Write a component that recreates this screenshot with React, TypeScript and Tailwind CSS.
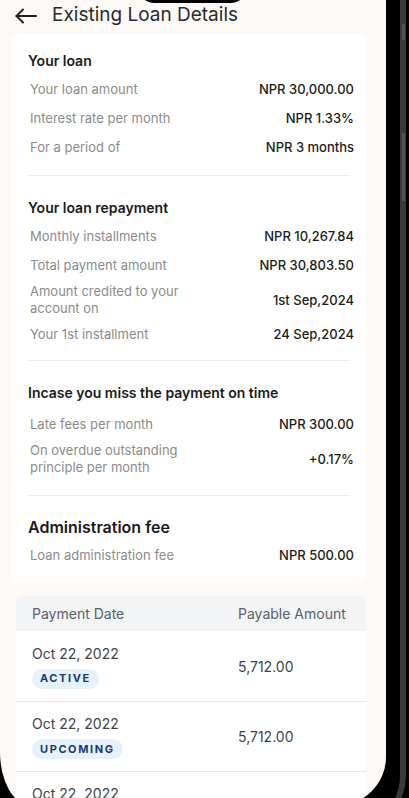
import React from 'react'

type Row = { label: string; value: string; twoLine?: boolean }

const loanRows: Row[] = [
  { label: 'Your loan amount', value: 'NPR 30,000.00' },
  { label: 'Interest rate per month', value: 'NPR 1.33%' },
  { label: 'For a period of', value: 'NPR 3 months' },
]

const repaymentRows: Row[] = [
  { label: 'Monthly installments', value: 'NPR 10,267.84' },
  { label: 'Total payment amount', value: 'NPR 30,803.50' },
  { label: 'Amount credited to your account on', value: '1st Sep,2024', twoLine: true },
  { label: 'Your 1st installment', value: '24 Sep,2024' },
]

const missRows: Row[] = [
  { label: 'Late fees per month', value: 'NPR 300.00' },
  { label: 'On overdue outstanding principle per month', value: '+0.17%', twoLine: true },
]

const payments = [
  { date: 'Oct 22, 2022', status: 'ACTIVE', amount: '5,712.00' },
  { date: 'Oct 22, 2022', status: 'UPCOMING', amount: '5,712.00' },
  { date: 'Oct 22, 2022', status: 'UPCOMING', amount: '5,712.00' },
]

function DetailRow({ row }: { row: Row }) {
  return (
    <div
      className={`flex items-center justify-between pl-0.5 leading-[17px] ${
        row.twoLine ? 'py-[3px]' : 'py-[6px]'
      }`}
    >
      <span className={`text-[13px] text-[#8b8b8b] ${row.twoLine ? 'w-[160px]' : ''}`}>{row.label}</span>
      <span className="text-[13px] font-medium text-[#1c1c1c]">{row.value}</span>
    </div>
  )
}

function Divider() {
  return <div className="mr-1 h-px bg-[#ececec]" />
}

export default function App() {
  return (
    <div className="relative h-[798px] overflow-hidden bg-black" style={{ fontFamily: 'Inter, "Noto Sans", sans-serif' }}>
      {/* phone frame */}
      <div className="h-[840px] w-[406px] rounded-br-[66px] border-r-[6px] border-b-[6px] border-[#3a3a3a]">
        <div className="h-full w-full rounded-br-[60px] bg-black pr-[12px]">
          <div className="relative h-[805px] w-[386px] overflow-hidden rounded-br-[48px] rounded-bl-[30px_53px] bg-[#fdf9f6]">
            {/* header */}
            <div className="flex h-[31px] items-center pl-[15px]">
              <svg width="22" height="16" viewBox="0 0 22 16" fill="none" stroke="#222" strokeWidth="2" strokeLinecap="round" strokeLinejoin="round">
                <path d="M21 8H1.5" />
                <path d="M8 1.5L1.5 8L8 14.5" />
              </svg>
              <h1 className="ml-[15px] text-[19px] text-[#2a2a2a]">Existing Loan Details</h1>
            </div>

            {/* details card */}
            <div className="ml-3 mt-[4px] w-[354px] rounded-md bg-white pl-4 pr-3 pt-4 pb-[12px]">
              <h2 className="text-[14px] font-semibold leading-5 text-[#1a1a1a]">Your loan</h2>
              <div className="mt-[4px]">
                {loanRows.map((r) => (
                  <DetailRow key={r.label} row={r} />
                ))}
              </div>
              <div className="mt-[13px]">
                <Divider />
              </div>

              <h2 className="mt-[22px] text-[14px] font-semibold leading-5 text-[#1a1a1a]">Your loan repayment</h2>
              <div className="mt-[4px]">
                {repaymentRows.map((r) => (
                  <DetailRow key={r.label} row={r} />
                ))}
              </div>
              <div className="mt-[11px]">
                <Divider />
              </div>

              <h2 className="mt-[22px] text-[14px] font-semibold leading-5 text-[#1a1a1a]">
                Incase you miss the payment on time
              </h2>
              <div className="mt-[7px]">
                {missRows.map((r) => (
                  <DetailRow key={r.label} row={r} />
                ))}
              </div>
              <div className="mt-[16px]">
                <Divider />
              </div>

              <h2 className="mt-[19px] text-[16px] font-semibold leading-6 text-[#1a1a1a]">Administration fee</h2>
              <div className="mt-[2px]">
                <DetailRow row={{ label: 'Loan administration fee', value: 'NPR 500.00' }} />
              </div>
            </div>

            {/* payments table */}
            <div className="ml-4 mt-[14px] w-[350px] overflow-hidden rounded-t-md bg-white">
              <div className="grid h-[35px] grid-cols-[206px_1fr] items-center bg-[#f3f4f6] pl-4 text-[14px] text-[#5a606b]">
                <span>Payment Date</span>
                <span>Payable Amount</span>
              </div>
              {payments.map((p, i) => (
                <div
                  key={i}
                  className={`grid h-[70px] grid-cols-[206px_1fr] items-center pl-4 ${
                    i > 0 ? 'border-t border-[#e5e7eb]' : ''
                  }`}
                >
                  <div className="flex flex-col items-start">
                    <span className="text-[14px] leading-5 text-[#3d434c]">{p.date}</span>
                    <span className="mt-[5px] flex h-5 items-center rounded-full bg-[#e7f1fc] px-2 text-[11px] font-bold tracking-[1.6px] text-[#1b3a6b]">
                      {p.status}
                    </span>
                  </div>
                  <span className="text-[14px] text-[#3d434c]">{p.amount}</span>
                </div>
              ))}
            </div>
          </div>
        </div>
      </div>

      {/* camera pill */}
      <div className="absolute left-[138px] top-[-30px] h-[33px] w-[109px] rounded-full bg-black" />
      {/* side buttons */}
      <div className="absolute right-[4px] top-[24px] h-[16px] w-[3px] bg-[#555]" />
      <div className="absolute right-[4px] top-[133px] h-[68px] w-[3px] bg-[#555]" />
    </div>
  )
}
